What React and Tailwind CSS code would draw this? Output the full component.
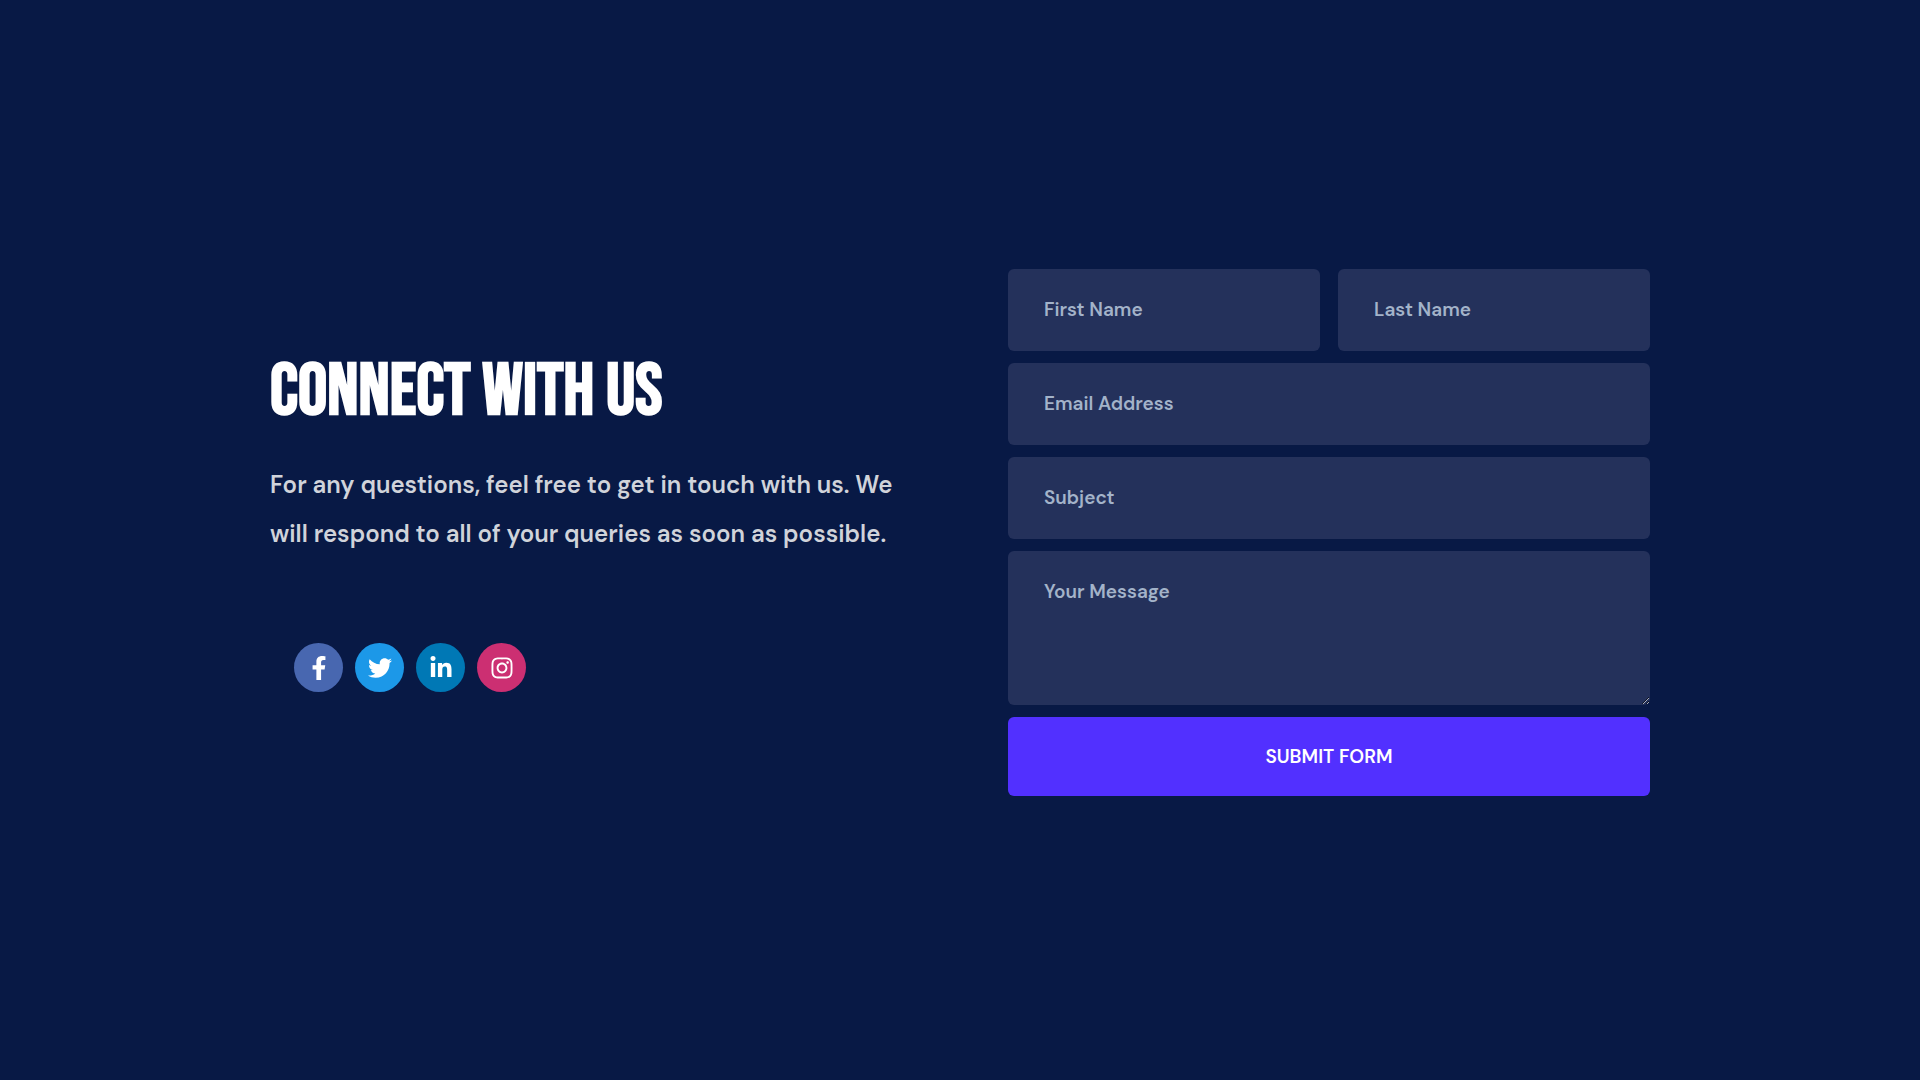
import { FaFacebookF, FaTwitter, FaLinkedinIn, FaInstagram } from "react-icons/fa";

const fieldClass =
  "block w-full min-w-0 rounded-md bg-[#24315b] px-9 py-6 text-[19px] leading-[34px] font-semibold text-white placeholder:text-[#a3b3c9] placeholder:opacity-100 outline-none focus:ring-2 focus:ring-[#5230ff]";

const socials = [
  { label: "Facebook", Icon: FaFacebookF, color: "bg-[#4867b0]" },
  { label: "Twitter", Icon: FaTwitter, color: "bg-[#1c98e8]" },
  { label: "LinkedIn", Icon: FaLinkedinIn, color: "bg-[#0078b5]" },
  { label: "Instagram", Icon: FaInstagram, color: "bg-[#cc2f72]" },
];

function Field({ label, type = "text", name }) {
  return <input className={fieldClass} type={type} name={name} placeholder={label} aria-label={label} />;
}

export default function App() {
  return (
    <main className="flex min-h-screen items-center justify-center bg-[#081945] px-6 pb-4 font-['DM_Sans','Inter',sans-serif]">
      <div className="grid w-full max-w-[1380px] items-center gap-12 lg:grid-cols-2 lg:gap-24">
        <section className="pb-4">
          <h1 className="font-['Bebas_Neue','Roboto',sans-serif] text-[73px] leading-[72px] font-bold whitespace-nowrap text-white uppercase">
            Connect with us
          </h1>
          <p className="mt-8 text-[24px] leading-[49px] font-semibold text-[#d0d3da]">
            For any questions, feel free to get in touch with us. We will respond to all of your queries as soon as possible.
          </p>
          <ul className="mt-[85px] flex gap-3 pl-6">
            {socials.map(({ label, Icon, color }) => (
              <li key={label}>
                <a href="#" aria-label={label} className={`flex size-[49px] items-center justify-center rounded-full text-white ${color}`}>
                  <Icon size={24} />
                </a>
              </li>
            ))}
          </ul>
        </section>

        <form className="grid gap-3" onSubmit={(e) => e.preventDefault()}>
          <div className="grid grid-cols-2 gap-[18px]">
            <Field label="First Name" name="firstName" />
            <Field label="Last Name" name="lastName" />
          </div>
          <Field label="Email Address" type="email" name="email" />
          <Field label="Subject" name="subject" />
          <textarea className={`${fieldClass} h-[154px] resize`} name="message" placeholder="Your Message" aria-label="Your Message" />
          <button type="submit" className="rounded-md bg-[#5230ff] py-6 text-[19px] leading-[31px] font-semibold text-white uppercase">
            Submit form
          </button>
        </form>
      </div>
    </main>
  );
}
